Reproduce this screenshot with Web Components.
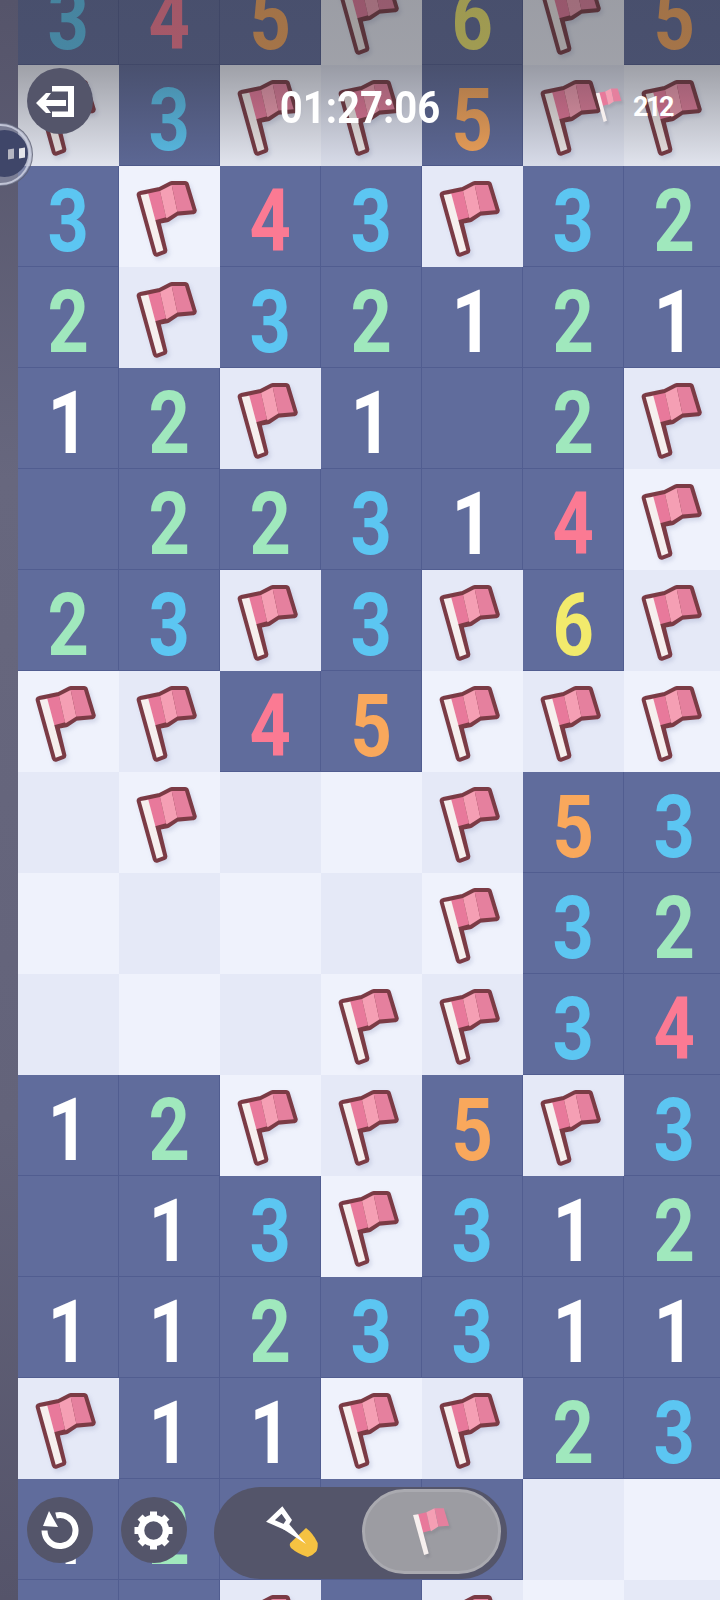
<!DOCTYPE html>
<html>
<head>
<meta charset="utf-8">
<title>Minesweeper</title>
<style>
  html, body { margin: 0; padding: 0; height: 1600px; overflow: hidden; background: #565468; }
</style>
</head>
<body>
<mine-game></mine-game>

<script>
// flag drawn in a 101 box, same coords as one cell
const FLAG_SHAPE = `
  <path class="line" d="M21.7 29 L41 25 L52.7 19 L66 19 L73.7 44.3 L57.7 45.7 L47.7 52.3 L37 54.3 L44.3 84.3 L37.7 86.7 Z"/>
  <path fill="#e8799b" d="M27 28 L41 25 L47 51.2 L35 54.5 Z"/>
  <path fill="#f59fb4" d="M41 25 L52.7 19 L58.3 45.6 L47.7 52.3 L47 51.2 Z"/>
  <path fill="#e5809e" d="M52.7 19 L66 19 L73.7 44.3 L58.3 45.6 Z"/>
  <path class="pole" d="M21.7 29 L29.3 27.7 L44.3 84.3 L37.7 86.7 Z"/>`;

class FlagIcon extends HTMLElement {
  connectedCallback() {
    this.attachShadow({ mode: 'open' });
    this.shadowRoot.innerHTML = `
      <style>
        :host { display: block; width: 101px; height: 101px; }
        svg { display: block; width: 100%; height: 100%; overflow: visible; filter: drop-shadow(2px 3px 2px rgba(95, 107, 155, 0.2)); }
        .line { fill: #7b3b45; stroke: #7b3b45; stroke-width: 8; stroke-linejoin: round; }
        .pole { fill: #f6efee; }
        :host([plain]) .line { display: none; }
        :host([plain]) svg { filter: drop-shadow(2px 3px 1px rgba(60, 60, 70, 0.12)); }
      </style>
      <svg viewBox="0 0 101 101">${FLAG_SHAPE}</svg>
    `;
  }
}
customElements.define('flag-icon', FlagIcon);

const DIGIT_COLORS = { 1: '#ffffff', 2: '#a0e8bd', 3: '#5cc6f2', 4: '#fb7a93', 5: '#f9a85c', 6: '#f2ea6c' };

class MineCell extends HTMLElement {
  connectedCallback() {
    const v = this.getAttribute('v');
    this.attachShadow({ mode: 'open' });
    let inner = '';
    if (v === 'F') inner = '<flag-icon></flag-icon>';
    else if (v >= '1' && v <= '6') inner = `<span style="color:${DIGIT_COLORS[v]}">${v}</span>`;
    this.shadowRoot.innerHTML = `
      <style>
        :host { display: flex; align-items: center; justify-content: center; box-sizing: border-box; width: 101px; height: 101px; background: #606c9c; border: 1px solid #515d90; border-width: 0 1px 1px 0; }
        :host([light]) { background: #eff2fc; border: 0; }
        :host([light][alt]) { background: #e5e9f7; }
        span { display: block; font: 700 88px/88px Roboto, "Liberation Sans", sans-serif; margin-top: 10px; transform: scaleX(0.82); }
        flag-icon { flex: none; }
      </style>
      ${inner}
    `;
  }
}
customElements.define('mine-cell', MineCell);

// D = opened blank, L = unopened blank, F = flag
const ROWS = [
  '345F6F5',
  'F3FF5FF',
  '3F43F32',
  '2F32121',
  '12F1D2F',
  'D22314F',
  '23F3F6F',
  'FF45FFF',
  'LFLLF53',
  'LLLLF32',
  'LLLFF34',
  '12FF5F3',
  'D13F312',
  '1123311',
  'F11FF23',
  '12DDDLL',
  'DDFDFLL'
];

class MineBoard extends HTMLElement {
  connectedCallback() {
    this.attachShadow({ mode: 'open' });
    let cells = '';
    ROWS.forEach((row, r) => {
      [...row].forEach((v, c) => {
        const light = v === 'F' || v === 'L';
        const alt = (r + c) % 2 === 0;
        cells += `<mine-cell v="${v}"${light ? ' light' : ''}${alt ? ' alt' : ''}></mine-cell>`;
      });
    });
    this.shadowRoot.innerHTML = `
      <style>
        :host { display: grid; grid-template-columns: repeat(7, 101px); grid-auto-rows: 101px; margin: -36px 0 0 18px; width: 707px; }
      </style>
      ${cells}
    `;
  }
}
customElements.define('mine-board', MineBoard);

class RoundButton extends HTMLElement {
  connectedCallback() {
    this.attachShadow({ mode: 'open' });
    this.shadowRoot.innerHTML = `
      <style>
        :host { display: block; width: 66px; height: 66px; border-radius: 50%; background: #54556a; flex: none; }
        ::slotted(svg) { display: block; }
      </style>
      <slot></slot>
    `;
  }
}
customElements.define('round-button', RoundButton);

class ToolToggle extends HTMLElement {
  connectedCallback() {
    this.attachShadow({ mode: 'open' });
    this.shadowRoot.innerHTML = `
      <style>
        :host { display: flex; box-sizing: border-box; width: 293px; height: 92px; padding: 2px 6px 5px 0; border-radius: 46px; background: #54556a; flex: none; }
        .slot { display: flex; align-items: center; justify-content: center; flex: 1; }
        .on { flex: none; width: 139px; box-sizing: border-box; border-radius: 43px; background: #9c9ca2; border: 3px solid #aaaab0; }
        flag-icon { width: 70px; height: 70px; margin: -3px 0 0 3px; }
        svg { display: block; margin-left: 10px; }
      </style>
      <div class="slot">
        <svg width="64" height="64" viewBox="260 1500 64 64">
          <path d="M305 1528 Q312 1533 316.7 1543 Q317 1549 315 1551.7 Q311 1556 306.7 1557 Q297 1554 290 1548 Q288 1545 289.3 1543 Z" fill="#f5c242"/>
          <path d="M282 1529 L288 1524 L305 1544 Z" fill="#fff"/>
          <path d="M269.5 1521 L281 1510 L288 1520 L283.5 1527 Z" fill="none" stroke="#fff" stroke-width="5" stroke-linejoin="miter"/>
        </svg>
      </div>
      <div class="slot on"><flag-icon plain></flag-icon></div>
    `;
  }
}
customElements.define('tool-toggle', ToolToggle);

class GameHud extends HTMLElement {
  connectedCallback() {
    this.attachShadow({ mode: 'open' });
    this.shadowRoot.innerHTML = `
      <style>
        :host { position: absolute; left: 18px; right: 0; top: 0; height: 166px; display: block; pointer-events: none; background: linear-gradient(180deg, rgba(40, 40, 44, 0.42) 0%, rgba(40, 40, 44, 0.4) 40%, rgba(40, 40, 44, 0.07) 100%); font-family: Roboto, "Liberation Sans", sans-serif; color: #fff; }
        .bar { position: absolute; left: 9px; right: 0; top: 68px; height: 66px; display: flex; align-items: center; }
        .time { position: absolute; left: -27px; width: 720px; top: 13px; text-align: center; font-size: 45px; line-height: 54px; font-weight: 700; transform: scaleX(0.89); }
        .count { margin-left: auto; display: flex; align-items: center; margin-right: 48px; }
        .count flag-icon { width: 50px; height: 50px; margin: 5px -2px 0 0; }
        .count span { font-size: 27px; line-height: 36px; font-weight: 700; letter-spacing: -2.5px; margin-top: 12px; }
      </style>
      <div class="bar">
        <round-button>
          <svg width="66" height="66" viewBox="0 0 66 66">
            <path d="M25 18 H47 V49 H25 V43.5 H41 V23.5 H25 Z" fill="#fff"/>
            <path d="M9 35 L19 25 L24 25 L19 32 L39 32 L39 38 L19 38 L24 45 L19 45 Z" fill="#fff"/>
          </svg>
        </round-button>
        <div class="time">01:27:06</div>
        <div class="count">
          <flag-icon plain></flag-icon>
          <span>212</span>
        </div>
      </div>
    `;
  }
}
customElements.define('game-hud', GameHud);

class GameDock extends HTMLElement {
  connectedCallback() {
    this.attachShadow({ mode: 'open' });
    this.shadowRoot.innerHTML = `
      <style>
        :host { position: absolute; left: 27px; bottom: 21px; display: flex; align-items: flex-start; gap: 27.5px; }
        round-button { margin-top: 10px; }
      </style>
      <round-button>
        <svg width="66" height="66" viewBox="0 0 66 66">
          <path d="M29 18.5 A15.5 15.5 0 1 1 17.5 33.5" fill="none" stroke="#fff" stroke-width="6"/>
          <path d="M22 14 L16 29 L31 30 Z" fill="#fff"/>
        </svg>
      </round-button>
      <round-button>
        <svg width="66" height="66" viewBox="0 0 66 66">
          <circle cx="32.5" cy="33.5" r="12.5" fill="none" stroke="#fff" stroke-width="6.5"/>
          <g fill="#fff">
            <rect x="29" y="14.5" width="7" height="6"/>
            <rect x="29" y="14.5" width="7" height="6" transform="rotate(45 32.5 33.5)"/>
            <rect x="29" y="14.5" width="7" height="6" transform="rotate(90 32.5 33.5)"/>
            <rect x="29" y="14.5" width="7" height="6" transform="rotate(135 32.5 33.5)"/>
            <rect x="29" y="14.5" width="7" height="6" transform="rotate(180 32.5 33.5)"/>
            <rect x="29" y="14.5" width="7" height="6" transform="rotate(225 32.5 33.5)"/>
            <rect x="29" y="14.5" width="7" height="6" transform="rotate(270 32.5 33.5)"/>
            <rect x="29" y="14.5" width="7" height="6" transform="rotate(315 32.5 33.5)"/>
          </g>
        </svg>
      </round-button>
      <tool-toggle></tool-toggle>
    `;
  }
}
customElements.define('game-dock', GameDock);

class AssistDot extends HTMLElement {
  connectedCallback() {
    this.attachShadow({ mode: 'open' });
    this.shadowRoot.innerHTML = `
      <style>
        :host { position: absolute; left: -32px; top: 122px; box-sizing: border-box; width: 65px; height: 65px; border-radius: 50%; background: rgba(150, 155, 178, 0.55); border: 1px solid rgba(70, 72, 90, 0.6); display: flex; align-items: center; justify-content: center; }
        .ring { position: absolute; inset: 1px; border-radius: 50%; border: 2px solid rgba(205, 208, 224, 0.85); }
        .in { flex: none; width: 47px; height: 47px; border-radius: 50%; background: #3f4669; display: flex; align-items: center; justify-content: flex-end; gap: 5px; padding-right: 3px; box-sizing: border-box; transform: translate(4px, -1px); }
        i { display: block; width: 6px; height: 10px; background: #b5b6c2; transform: skewY(-8deg); }
        i + i { background: #e4e5ea; margin-top: -2px; }
      </style>
      <div class="ring"></div>
      <div class="in"><i></i><i></i></div>
    `;
  }
}
customElements.define('assist-dot', AssistDot);

class MineGame extends HTMLElement {
  connectedCallback() {
    this.attachShadow({ mode: 'open' });
    this.shadowRoot.innerHTML = `
      <style>
        :host { display: block; position: relative; width: 720px; height: 1600px; overflow: hidden; background: #565468; }
        .rail { position: absolute; left: 0; top: 0; width: 18px; height: 100%; background: linear-gradient(180deg, #55546a 0%, #67677e 30%, #63637a 70%, #55546a 100%); }
      </style>
      <div class="rail"></div>
      <mine-board></mine-board>
      <game-hud></game-hud>
      <assist-dot></assist-dot>
      <game-dock></game-dock>
    `;
  }
}
customElements.define('mine-game', MineGame);
</script>
</body>
</html>
